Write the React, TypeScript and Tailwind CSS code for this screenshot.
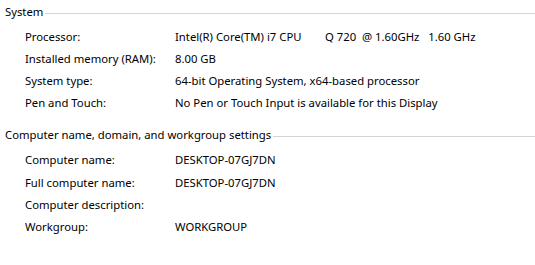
import React from "react";

const font = { fontFamily: '"Segoe UI", "Noto Sans", "Open Sans", sans-serif' };

function Header({ title }: { title: string }) {
  return (
    <div className="flex items-center h-[24px] pl-[5px]">
      <span className="whitespace-nowrap">{title}</span>
      <div className="flex-1 h-px bg-[#d5d5d5] ml-[2px] mt-[2px]" />
    </div>
  );
}

function Row({ label, value, h = "h-[22px]" }: { label: string; value?: string; h?: string }) {
  return (
    <div className={`grid grid-cols-[150px_1fr] items-center pl-[25px] ${h}`}>
      <span className="whitespace-nowrap">{label}</span>
      <span className="whitespace-pre">{value ?? ""}</span>
    </div>
  );
}

export default function App() {
  return (
    <div className="w-[535px] h-[265px] bg-white text-black text-[11.3px] leading-none overflow-hidden" style={font}>
      <Header title="System" />
      <div className="mt-[2px]">
        <Row label="Processor:" value={"Intel(R) Core(TM) i7 CPU        Q 720  @ 1.60GHz   1.60 GHz"} />
        <Row label="Installed memory (RAM):" value="8.00 GB" />
        <Row label="System type:" value="64-bit Operating System, x64-based processor" />
        <Row label="Pen and Touch:" value="No Pen or Touch Input is available for this Display" />
      </div>
      <div className="mt-[9px]">
        <Header title="Computer name, domain, and workgroup settings" />
      </div>
      <div className="mt-[1px]">
        <Row label="Computer name:" value="DESKTOP-07GJ7DN" h="h-[23px]" />
        <Row label="Full computer name:" value="DESKTOP-07GJ7DN" h="h-[23px]" />
        <Row label="Computer description:" h="h-[22px]" />
        <Row label="Workgroup:" value="WORKGROUP" h="h-[22px]" />
      </div>
    </div>
  );
}
